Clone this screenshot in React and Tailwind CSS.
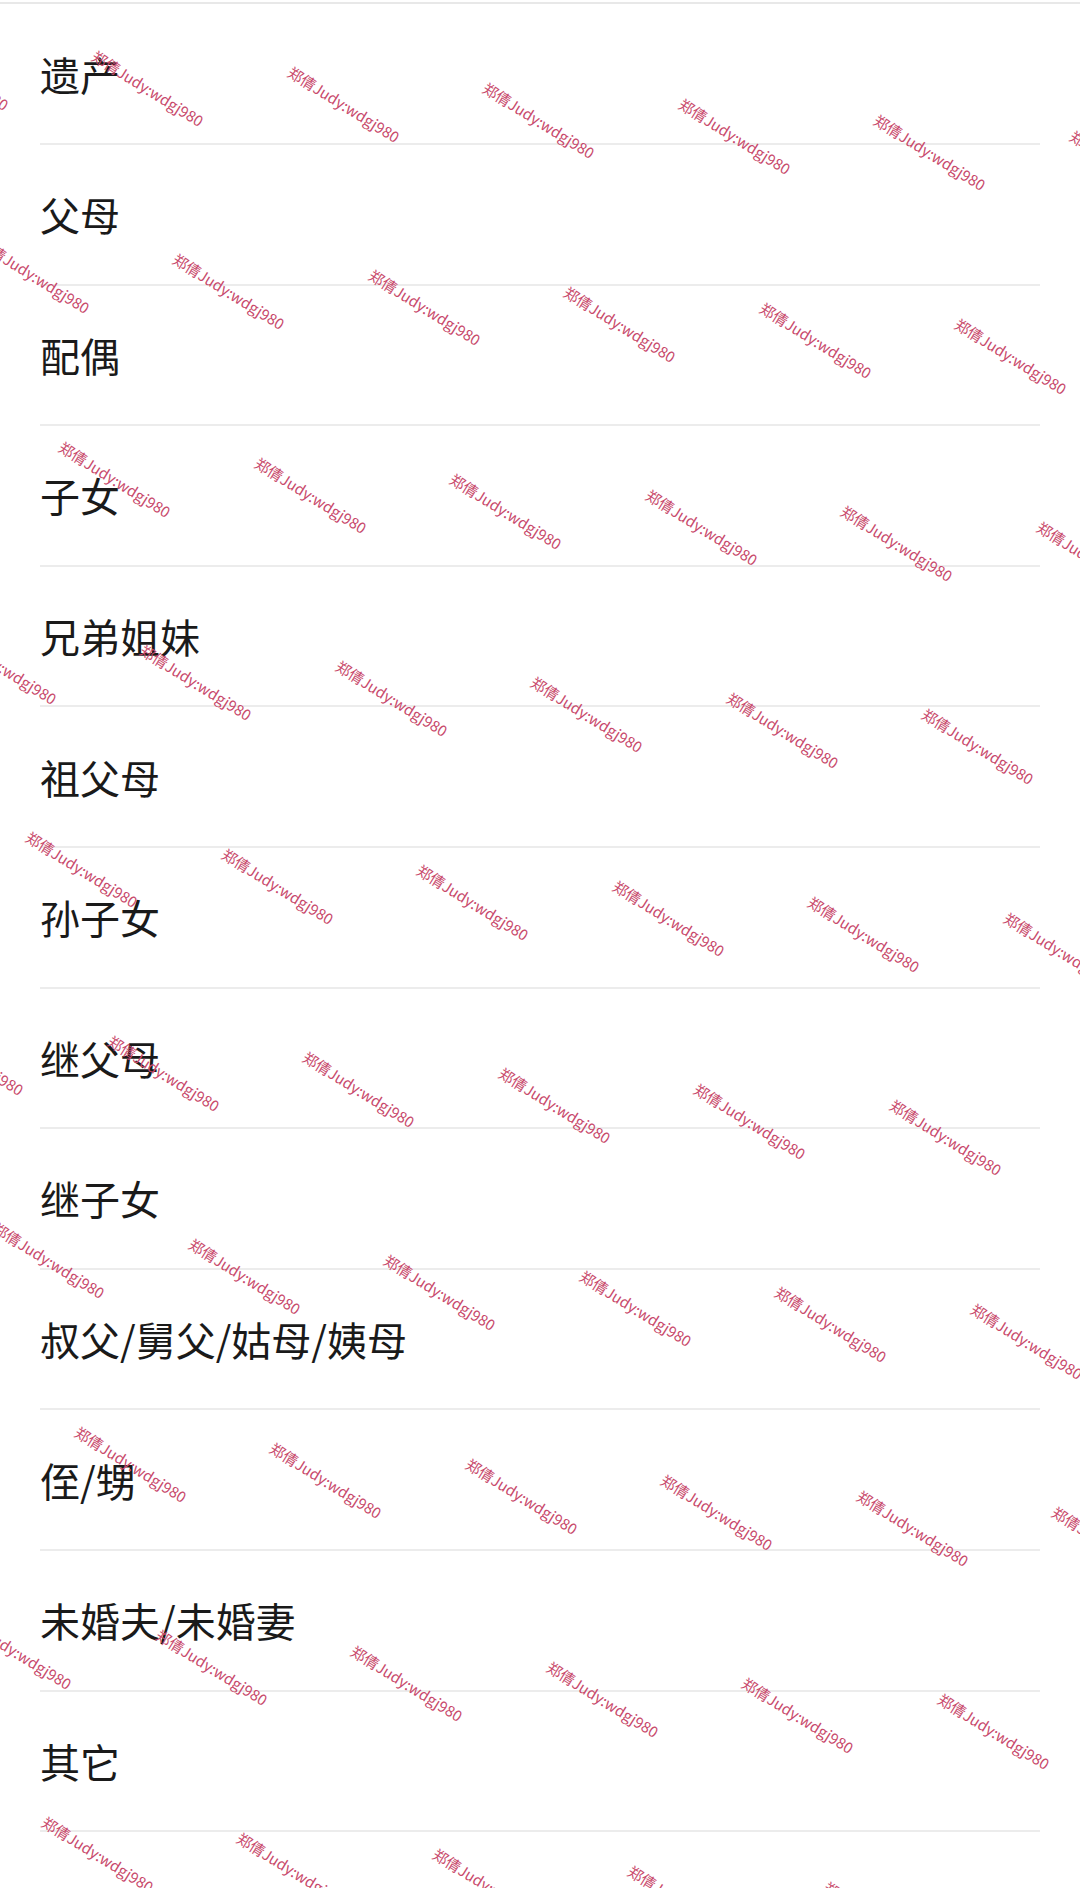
const ITEMS = [
  '遗产',
  '父母',
  '配偶',
  '子女',
  '兄弟姐妹',
  '祖父母',
  '孙子女',
  '继父母',
  '继子女',
  '叔父/舅父/姑母/姨母',
  '侄/甥',
  '未婚夫/未婚妻',
  '其它',
]

const MARK = '郑倩Judy:wdgj980'

// watermark lattice (centers), measured off the screenshot
function marks() {
  const out = []
  for (let r = -1; r <= 10; r++) {
    for (let k = -7; k <= 7; k++) {
      const x = 148 + 195.5 * k + 81.3 * r
      const y = 88 + 16.07 * k + 203.4 * r
      if (x < -80 || x > 1160 || y < -60 || y > 1950) continue
      out.push({ key: `${r}-${k}`, x, y })
    }
  }
  return out
}

function Row({ label }) {
  return (
    <div>
      <div className="h-[138.6px] flex items-center pl-[40px] text-[40px] leading-none text-[#1a1a1a]">
        {label}
      </div>
      <div className="mx-[40px] h-[2px] bg-[#ececec]" />
    </div>
  )
}

export default function App() {
  return (
    <div
      className="relative w-[1080px] h-[1888px] overflow-hidden bg-white"
      style={{ fontFamily: '"Noto Sans CJK SC", "Noto Sans", sans-serif' }}
    >
      <div className="mt-[2.4px] h-[2px] bg-[#e8e8e8]" />
      {ITEMS.map((it) => (
        <Row key={it} label={it} />
      ))}

      <div className="absolute inset-0 pointer-events-none">
        {marks().map((m) => (
          <span
            key={m.key}
            className="absolute whitespace-nowrap text-[15px] leading-none text-[#c8496b] -translate-x-1/2 -translate-y-1/2 rotate-[32deg]"
            style={{ left: m.x, top: m.y }}
          >
            {MARK}
          </span>
        ))}
      </div>
    </div>
  )
}
